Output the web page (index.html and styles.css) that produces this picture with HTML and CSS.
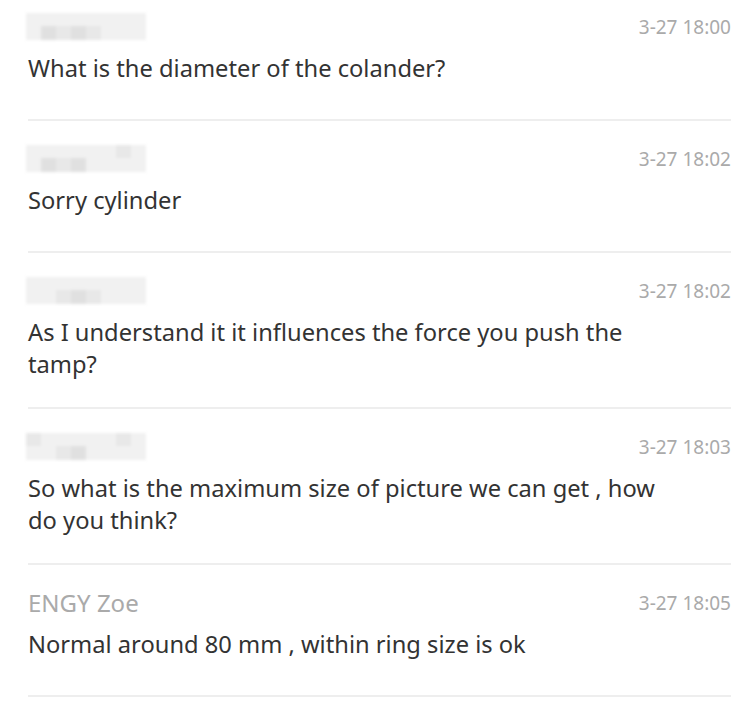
FILE: index.html
```html
<!DOCTYPE html>
<html lang="en">
<head>
<meta charset="utf-8">
<title>Comments</title>
<link rel="stylesheet" href="styles.css">
</head>
<body>
<ul class="list">
  <li class="item">
    <div class="head">
      <div class="name blur"><span></span><span></span><span></span><span></span><span></span><span></span><span></span><span></span><span></span><span class="d"></span><span class="m"></span><span class="d"></span><span class="m"></span><span></span><span></span><span></span></div>
      <span class="time">3-27 18:00</span>
    </div>
    <p class="msg">What is the diameter of the colander?</p>
  </li>
  <li class="item">
    <div class="head">
      <div class="name blur"><span></span><span></span><span></span><span></span><span></span><span></span><span class="m"></span><span></span><span></span><span class="d"></span><span class="m"></span><span class="d"></span><span></span><span></span><span></span><span></span></div>
      <span class="time">3-27 18:02</span>
    </div>
    <p class="msg">Sorry cylinder</p>
  </li>
  <li class="item">
    <div class="head">
      <div class="name blur"><span></span><span></span><span></span><span></span><span></span><span></span><span></span><span></span><span></span><span></span><span class="m"></span><span class="d"></span><span class="m"></span><span></span><span></span><span></span></div>
      <span class="time">3-27 18:02</span>
    </div>
    <p class="msg">As I understand it it influences the force you push the tamp?</p>
  </li>
  <li class="item">
    <div class="head">
      <div class="name blur"><span class="m"></span><span></span><span></span><span></span><span></span><span></span><span class="m"></span><span></span><span></span><span></span><span class="m"></span><span class="d"></span><span></span><span></span><span></span><span></span></div>
      <span class="time">3-27 18:03</span>
    </div>
    <p class="msg">So what is the maximum size of picture we can get , how do you think?</p>
  </li>
  <li class="item">
    <div class="head">
      <div class="name">ENGY Zoe</div>
      <span class="time">3-27 18:05</span>
    </div>
    <p class="msg">Normal around 80 mm , within ring size is ok</p>
  </li>
</ul>
</body>
</html>
```

FILE: styles.css
```css
html, body {
  margin: 0;
  padding: 0;
  background: #ffffff;
}

body {
  font-family: "Noto Sans", "Open Sans", sans-serif;
  color: #333333;
}

.list {
  list-style: none;
  margin: 0;
  padding: 0 19px 0 28px;
}

.item {
  padding: 24px 0 27px;
  border-bottom: 2px solid #eeeeee;
}

.item:first-child {
  padding-top: 13px;
}

.head {
  display: flex;
  justify-content: space-between;
  align-items: center;
  height: 27px;
}

.name {
  font-size: 24px;
  color: #aaaaaa;
  line-height: 27px;
}

.blur {
  width: 120px;
  height: 27px;
  margin-left: -2px;
  display: grid;
  grid-template-columns: repeat(8, 1fr);
  grid-template-rows: 13px 14px;
  filter: blur(1.5px);
}

.blur span {
  background: #f1f1f1;
}

.blur span.m {
  background: #e8e8e8;
}

.blur span.d {
  background: #e0e0e0;
}

.time {
  font-size: 19px;
  color: #aaaaaa;
  line-height: 24px;
}

.msg {
  margin: 12px 0 0;
  font-size: 23.7px;
  line-height: 32px;
  min-height: 40px;
  color: #333333;
  padding-right: 60px;
}
```
